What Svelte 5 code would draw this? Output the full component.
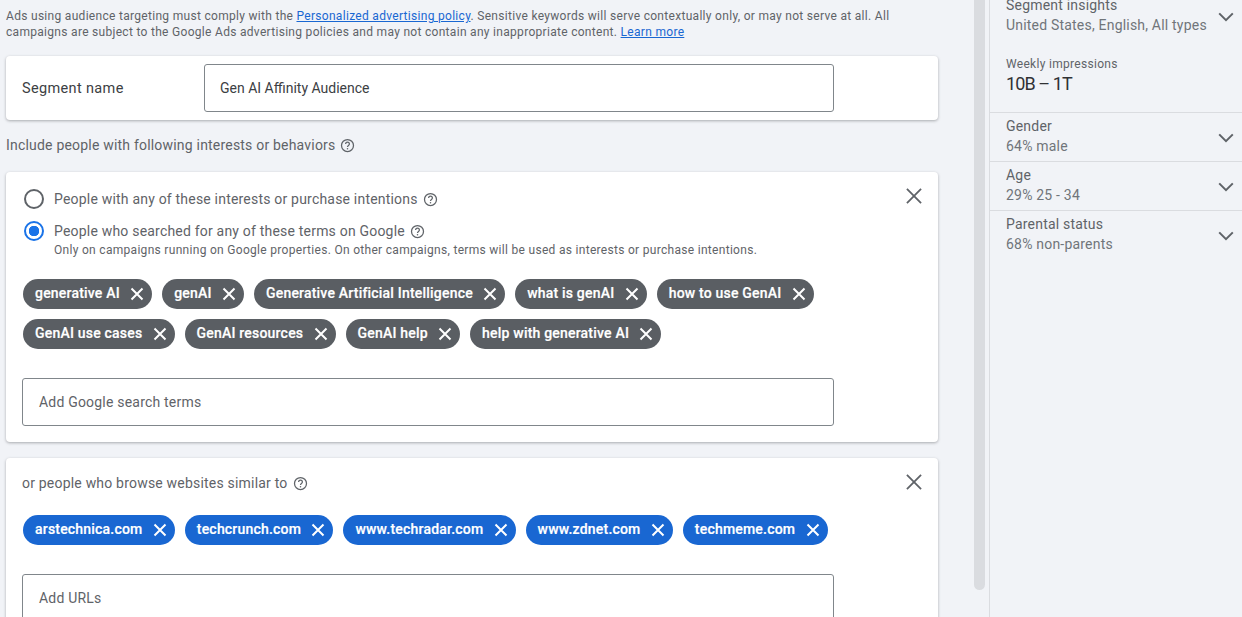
<script>
	const searchTerms = [
		["generative AI", "genAI", "Generative Artificial Intelligence", "what is genAI", "how to use GenAI"],
		["GenAI use cases", "GenAI resources", "GenAI help", "help with generative AI"]
	];
	const sites = ["arstechnica.com", "techcrunch.com", "www.techradar.com", "www.zdnet.com", "techmeme.com"];
	const insights = [
		{ title: "Gender", value: "64% male" },
		{ title: "Age", value: "29% 25 - 34" },
		{ title: "Parental status", value: "68% non-parents" }
	];
</script>

{#snippet help()}
	<svg class="help" viewBox="0 0 24 24" aria-hidden="true">
		<circle cx="12" cy="12" r="9.6" fill="none" stroke="currentColor" stroke-width="2" />
		<path d="M9 9.6a3 3 0 0 1 6 0c0 2.2-3 2.3-3 4.6" fill="none" stroke="currentColor" stroke-width="2" />
		<circle cx="12" cy="17.2" r="1.25" fill="currentColor" />
	</svg>
{/snippet}

{#snippet cross(cls)}
	<svg class={cls} viewBox="0 0 14 14" aria-hidden="true">
		<path d="M1.5 1.5l11 11M12.5 1.5l-11 11" fill="none" stroke="currentColor" />
	</svg>
{/snippet}

{#snippet chevron()}
	<svg class="chevron" viewBox="0 0 16 10" aria-hidden="true">
		<path d="M1.2 1.4L8 8.2l6.8-6.8" fill="none" stroke="currentColor" stroke-width="2" />
	</svg>
{/snippet}

{#snippet chip(label, cls)}
	<span class="chip {cls}">{label}{@render cross("chip-x")}</span>
{/snippet}

<div class="page">
	<main class="main">
		<p class="notice">
			Ads using audience targeting must comply with the <a href="#policy">Personalized advertising policy</a>. Sensitive keywords will serve contextually only, or may not serve at all. All<br />
			campaigns are subject to the Google Ads advertising policies and may not contain any inappropriate content. <a href="#learn">Learn more</a>
		</p>

		<section class="card name-card">
			<span class="name-label">Segment name</span>
			<div class="field name-field">Gen AI Affinity Audience</div>
		</section>

		<div class="include">Include people with following interests or behaviors {@render help()}</div>

		<section class="card terms-card">
			{@render cross("card-x")}
			<div class="radio-row">
				<span class="radio"></span>
				<span>People with any of these interests or purchase intentions</span>
				{@render help()}
			</div>
			<div class="radio-row second">
				<span class="radio on"></span>
				<span>People who searched for any of these terms on Google</span>
				{@render help()}
			</div>
			<div class="hint">Only on campaigns running on Google properties. On other campaigns, terms will be used as interests or purchase intentions.</div>
			{#each searchTerms as row}
				<div class="chips">
					{#each row as term}
						{@render chip(term, "grey")}
					{/each}
				</div>
			{/each}
			<div class="field add-field terms-field">Add Google search terms</div>
		</section>

		<section class="card sites-card">
			{@render cross("card-x")}
			<div class="sites-title">or people who browse websites similar to {@render help()}</div>
			<div class="chips">
				{#each sites as site}
					{@render chip(site, "blue")}
				{/each}
			</div>
			<div class="field add-field sites-field">Add URLs</div>
		</section>

		<div class="scrollbar"></div>
	</main>

	<aside class="side">
		<div class="summary">
			<div class="row-head">
				<div>
					<div class="title">Segment insights</div>
					<div class="value">United States, English, All types</div>
				</div>
				{@render chevron()}
			</div>
			<div class="weekly">Weekly impressions</div>
			<div class="big">10B – 1T</div>
		</div>
		{#each insights as item}
			<div class="row-head insight">
				<div>
					<div class="title">{item.title}</div>
					<div class="value">{item.value}</div>
				</div>
				{@render chevron()}
			</div>
		{/each}
	</aside>
</div>

<style>
	:global(body) {
		margin: 0;
		background: #f1f3f7;
	}
	.page {
		display: flex;
		height: 617px;
		overflow: hidden;
		font-family: Roboto, "Liberation Sans", sans-serif;
		color: #3c4043;
		background: #f1f3f7;
	}
	.main {
		position: relative;
		box-sizing: border-box;
		width: 990px;
		flex: none;
		padding: 9px 0 0 6px;
		border-right: 1px solid #dadce0;
	}
	.notice {
		margin: 0;
		width: 932px;
		font-size: 12px;
		line-height: 15.5px;
		letter-spacing: 0.3px;
		color: #5f6368;
	}
	.notice a {
		color: #1967d2;
	}
	.card {
		position: relative;
		box-sizing: border-box;
		width: 932px;
		background: #fff;
		border-radius: 4px;
		box-shadow: 0 1px 3px rgba(60, 64, 67, 0.4);
	}
	.name-card {
		display: flex;
		align-items: center;
		height: 64px;
		margin-top: 16px;
		padding-left: 16px;
	}
	.name-label {
		width: 182px;
		font-size: 14.5px;
		letter-spacing: 0.35px;
	}
	.field {
		box-sizing: border-box;
		height: 48px;
		display: flex;
		align-items: center;
		padding-left: 16px;
		border: 1px solid #80868b;
		border-radius: 3px;
		font-size: 14px;
		background: #fff;
	}
	.name-field {
		width: 630px;
		padding-left: 15px;
	}
	.add-field {
		width: 812px;
		color: #5f6368;
		letter-spacing: 0.2px;
	}
	.include {
		display: flex;
		align-items: center;
		gap: 5px;
		height: 20px;
		margin: 15px 0 17px;
		font-size: 14px;
		letter-spacing: 0.2px;
		color: #5f6368;
	}
	.help {
		width: 15px;
		height: 15px;
		color: #5f6368;
		flex: none;
	}
	.terms-card {
		height: 270px;
		padding: 17px 16px 0;
	}
	.card-x {
		position: absolute;
		top: 15px;
		right: 15px;
		width: 18px;
		height: 18px;
		stroke-width: 1.4;
		color: #5f6368;
	}
	.radio-row {
		display: flex;
		align-items: center;
		gap: 5px;
		height: 20px;
		font-size: 14px;
		letter-spacing: 0.2px;
		color: #5f6368;
	}
	.radio-row.second {
		margin-top: 12px;
	}
	.radio {
		box-sizing: border-box;
		width: 20px;
		height: 20px;
		margin: 0 5px 0 2px;
		border: 2px solid #5f6368;
		border-radius: 50%;
		flex: none;
	}
	.radio.on {
		border-color: #1a73e8;
		background: radial-gradient(circle, #1a73e8 0 5px, transparent 5.5px);
	}
	.hint {
		margin: 2px 0 21px 32px;
		font-size: 12px;
		line-height: 15px;
		letter-spacing: 0.3px;
		color: #5f6368;
	}
	.chips {
		display: flex;
		gap: 10px;
		margin: 0 0 10px 1px;
	}
	.chip {
		display: flex;
		align-items: center;
		box-sizing: border-box;
		height: 30px;
		padding: 0 8px 2px 12px;
		border-radius: 15px;
		font-size: 14px;
		font-weight: 500;
		letter-spacing: 0.2px;
		-webkit-text-stroke: 0.2px #fff;
		color: #fff;
		white-space: nowrap;
	}
	.chip.grey {
		background: #5a5e63;
	}
	.chip.blue {
		background: #1967d2;
	}
	.chip-x {
		width: 14px;
		height: 14px;
		margin: 2px 0 0 10.3px;
		stroke-width: 2;
	}
	.terms-field {
		margin-top: 29px;
	}
	.sites-card {
		height: 200px;
		margin-top: 16px;
		padding: 15px 16px 0;
	}
	.sites-title {
		display: flex;
		align-items: center;
		gap: 5px;
		height: 20px;
		margin-bottom: 22px;
		font-size: 14px;
		letter-spacing: 0.2px;
		color: #5f6368;
	}
	.sites-field {
		margin-top: 29px;
	}
	.scrollbar {
		position: absolute;
		left: 974px;
		top: 0;
		width: 11px;
		height: 590px;
		border-radius: 0 0 6px 6px;
		background: #dadce0;
	}
	.side {
		flex: 1;
		min-width: 0;
	}
	.summary {
		height: 118px;
		box-sizing: border-box;
		border-bottom: 1px solid #dadce0;
		margin-top: -5px;
	}
	.row-head {
		display: flex;
		justify-content: space-between;
		align-items: center;
		padding: 0 8px 0 16px;
	}
	.title {
		font-size: 14px;
		line-height: 20px;
		letter-spacing: 0.2px;
		color: #5f6368;
	}
	.value {
		font-size: 14px;
		line-height: 20px;
		letter-spacing: 0.2px;
		color: #70757a;
	}
	.weekly {
		margin: 21px 0 0 16px;
		font-size: 12px;
		line-height: 16px;
		letter-spacing: 0.3px;
		color: #5f6368;
	}
	.big {
		margin-left: 16px;
		font-size: 18px;
		line-height: 24px;
		letter-spacing: -0.9px;
		color: #303134;
	}
	.insight {
		box-sizing: border-box;
		height: 49px;
		padding-bottom: 2px;
		border-bottom: 1px solid #dadce0;
	}
	.insight:last-child {
		border-bottom-color: transparent;
	}
	.chevron {
		width: 16px;
		height: 10px;
		margin-top: 4px;
		color: #5f6368;
		flex: none;
	}
</style>
